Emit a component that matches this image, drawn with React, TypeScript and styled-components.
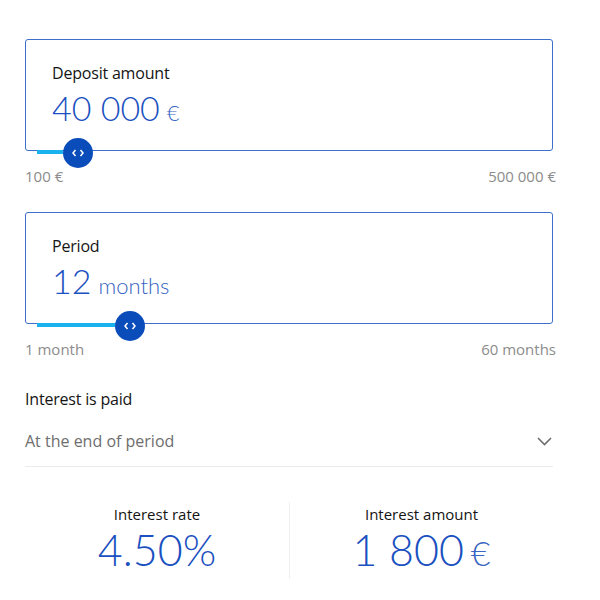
import styled, { createGlobalStyle } from "styled-components";

const GlobalStyle = createGlobalStyle`
  body {
    margin: 0;
    background: #fff;
    font-family: "Open Sans", "Liberation Sans", sans-serif;
  }
`;

const Page = styled.div`
  width: 528px;
  padding: 39px 0 0 25px;
`;

const Field = styled.div`
  position: relative;
  box-sizing: border-box;
  height: 112px;
  border: 1px solid #3d6fcb;
  border-radius: 3px;
  padding: 22px 26px 0;
`;

const Label = styled.div`
  font-size: 16px;
  font-weight: 500;
  letter-spacing: -0.2px;
  line-height: 22px;
  color: #151515;
`;

const Value = styled.div`
  margin-top: 3px;
  font-family: Lato, "Open Sans", sans-serif;
  font-weight: 300;
  font-size: 34px;
  line-height: 42px;
  color: #1a50c0;
  white-space: nowrap;
`;

const Unit = styled.span<{ $size: number }>`
  margin-left: 7px;
  font-size: ${(p) => p.$size}px;
  color: #3864c2;
`;

const Fill = styled.div`
  position: absolute;
  top: 100%;
  left: 11px;
  height: 4px;
  background: #19b2ee;
`;

const Handle = styled.div`
  position: absolute;
  top: calc(100% - 12px);
  width: 30px;
  height: 30px;
  border-radius: 50%;
  background: #0b4cbb;
  display: flex;
  align-items: center;
  justify-content: center;
`;

const Range = styled.div`
  display: flex;
  justify-content: space-between;
  width: 531px;
  margin: 14px 0 25px;
  font-size: 15px;
  line-height: 22px;
  color: #8c8c8c;
`;

const Title = styled.div`
  margin-top: 28px;
  font-size: 16px;
  font-weight: 500;
  letter-spacing: -0.2px;
  line-height: 22px;
  color: #151515;
`;

const Select = styled.div`
  margin-top: 20px;
  padding-bottom: 14px;
  border-bottom: 1px solid #ececec;
  display: flex;
  justify-content: space-between;
  align-items: center;
  font-size: 16px;
  line-height: 22px;
  color: #6e6e6e;
  svg {
    margin-right: 1px;
  }
`;

const Results = styled.div`
  display: grid;
  grid-template-columns: 1fr 1fr;
  margin-top: 35px;
`;

const Result = styled.div`
  display: flex;
  flex-direction: column;
  align-items: center;
  padding: 2px 0 0;
  & + & {
    border-left: 1px solid #f0f0f0;
  }
`;

const ResultLabel = styled.div`
  font-size: 15px;
  font-weight: 500;
  line-height: 20px;
  color: #151515;
`;

const ResultValue = styled.div`
  font-family: Lato, "Open Sans", sans-serif;
  font-weight: 300;
  font-size: 43px;
  line-height: 52px;
  color: #1a50c0;
  white-space: nowrap;
`;

const Arrows = () => (
  <svg width="12" height="8" viewBox="0 0 12 8" fill="none" stroke="#fff" strokeWidth="1.5">
    <polyline points="3.5,1 1,4 3.5,7" />
    <polyline points="8.5,1 11,4 8.5,7" />
  </svg>
);

type SliderProps = {
  label: string;
  value: string;
  unit: string;
  unitSize: number;
  pos: number;
  min: string;
  max: string;
};

const SliderField = ({ label, value, unit, unitSize, pos, min, max }: SliderProps) => (
  <>
    <Field>
      <Label>{label}</Label>
      <Value>
        {value}
        <Unit $size={unitSize}>{unit}</Unit>
      </Value>
      <Fill style={{ width: pos - 11 }} />
      <Handle style={{ left: pos }}>
        <Arrows />
      </Handle>
    </Field>
    <Range>
      <span>{min}</span>
      <span>{max}</span>
    </Range>
  </>
);

const App = () => {
  return (
    <Page>
      <GlobalStyle />
      <SliderField
        label="Deposit amount"
        value="40 000"
        unit="€"
        unitSize={22}
        pos={37}
        min="100 €"
        max="500 000 €"
      />
      <SliderField
        label="Period"
        value="12"
        unit="months"
        unitSize={22}
        pos={89}
        min="1 month"
        max="60 months"
      />
      <Title>Interest is paid</Title>
      <Select>
        <span>At the end of period</span>
        <svg width="15" height="9" viewBox="0 0 15 9" fill="none" stroke="#6e6e6e" strokeWidth="1.6">
          <polyline points="1,1 7.5,7.5 14,1" />
        </svg>
      </Select>
      <Results>
        <Result>
          <ResultLabel>Interest rate</ResultLabel>
          <ResultValue>4.50%</ResultValue>
        </Result>
        <Result>
          <ResultLabel>Interest amount</ResultLabel>
          <ResultValue>
            1 800<Unit $size={34}>€</Unit>
          </ResultValue>
        </Result>
      </Results>
    </Page>
  );
};

export default App;
